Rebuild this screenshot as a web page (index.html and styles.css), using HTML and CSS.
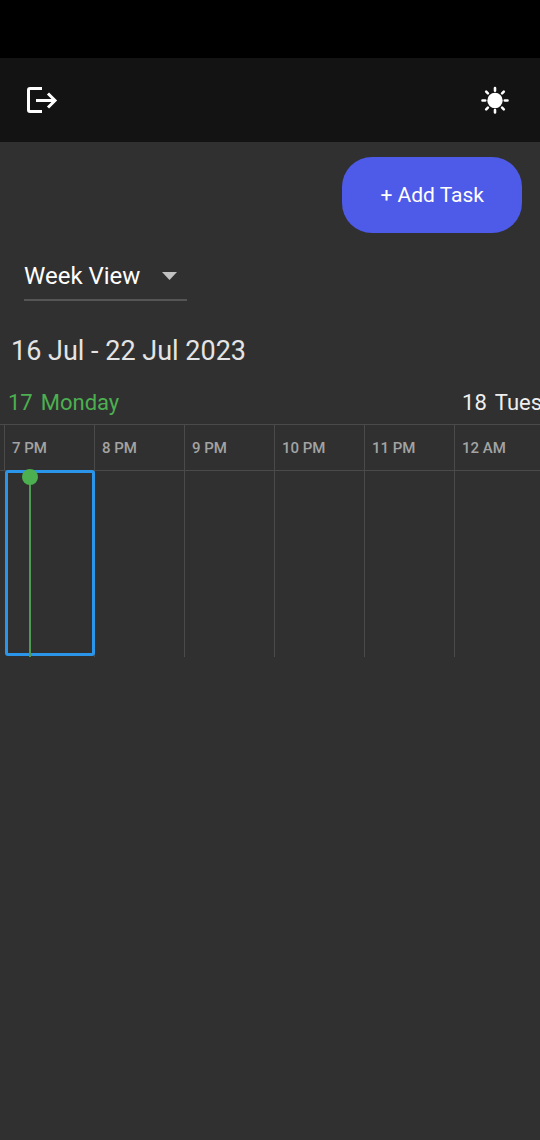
FILE: index.html
```html
<!DOCTYPE html>
<html lang="en">
<head>
<meta charset="utf-8">
<meta name="viewport" content="width=device-width, initial-scale=1">
<title>Week View</title>
<link rel="stylesheet" href="styles.css">
</head>
<body>
<div class="status-bar"></div>
<header class="app-bar">
  <button class="icon-button" type="button" aria-label="Log out">
    <svg width="32" height="28" viewBox="0 0 32 28" fill="none" stroke="currentColor" stroke-width="3">
      <path d="M16 2.5H4a1.5 1.5 0 0 0-1.500 1.500v20a1.500 1.500 0 0 0 1.500 1.500H16"/>
      <path d="M10 14.500H29M22 7.500l7 7-7 7"/>
    </svg>
  </button>
  <button class="icon-button" type="button" aria-label="Light theme">
    <svg width="28" height="28" viewBox="0 0 28 28" fill="none" stroke="currentColor" stroke-width="2.6" stroke-linecap="round">
      <circle cx="14" cy="14.500" r="7.700" fill="currentColor" stroke="none"/>
      <path d="M14 2v2.700M14 24v2.500M1.500 14.500h2.700M23.800 14.500h2.700M5.200 5.700l1.700 1.700M21.100 21.600l1.700 1.700M5.200 23.300l1.700-1.700M21.100 7.400l1.700-1.700"/>
    </svg>
  </button>
</header>
<main>
  <div class="actions"><button class="add-task" type="button">+ Add Task</button></div>
  <div class="view-picker">
    <select class="view-select" aria-label="Calendar view">
      <option>Week View</option>
      <option>Day View</option>
      <option>Month View</option>
    </select>
    <svg class="view-arrow" width="15" height="8" viewBox="0 0 15 8"><path d="M0 0h15L7.5 8z" fill="currentColor"/></svg>
  </div>
  <h1 class="range">16 Jul - 22 Jul 2023</h1>
  <div class="timeline">
    <table class="hours">
      <colgroup>
        <col class="col-edge">
        <col class="col-hour" span="6">
      </colgroup>
      <thead>
        <tr>
          <td class="day-edge"></td>
          <th class="day today" colspan="5" scope="colgroup"><span class="day-label"><span>17</span><span>Monday</span></span></th>
          <th class="day" scope="col"><span class="day-label"><span>18</span><span>Tuesday</span></span></th>
        </tr>
        <tr>
          <td class="hour-edge"></td>
          <th class="hour" scope="col">7 PM</th>
          <th class="hour" scope="col">8 PM</th>
          <th class="hour" scope="col">9 PM</th>
          <th class="hour" scope="col">10 PM</th>
          <th class="hour" scope="col">11 PM</th>
          <th class="hour" scope="col">12 AM</th>
        </tr>
      </thead>
      <tbody>
        <tr>
          <td class="slot-edge"></td>
          <td class="slot selected"><span class="now"></span></td>
          <td class="slot"></td>
          <td class="slot"></td>
          <td class="slot"></td>
          <td class="slot"></td>
          <td class="slot"></td>
        </tr>
      </tbody>
    </table>
  </div>
</main>
</body>
</html>
```
FILE: styles.css
```css
* { box-sizing: border-box; }

body {
  margin: 0;
  min-height: 100vh;
  background: #303030;
  color: #fff;
  font-family: Roboto, sans-serif;
}

.status-bar { height: 58px; background: #000; }

.app-bar {
  display: flex;
  align-items: center;
  justify-content: space-between;
  height: 84px;
  padding: 0 31px 0 26px;
  background: #131313;
}

.icon-button {
  display: flex;
  padding: 0;
  border: 0;
  background: none;
  color: #fff;
}

.actions {
  display: flex;
  justify-content: flex-end;
  padding: 15px 18px 0;
}

.add-task {
  height: 76px;
  padding: 0 38px;
  border: 0;
  border-radius: 30px;
  background: #4e5ae8;
  color: #fff;
  font: 400 21px/24px Roboto, sans-serif;
}

.view-picker {
  display: inline-grid;
  align-items: center;
  margin: 20px 24px 0;
  border-bottom: 2px solid #555;
}

.view-select {
  grid-area: 1 / 1;
  width: 163px;
  height: 46px;
  padding: 0;
  border: 0;
  appearance: none;
  background: none;
  color: #fff;
  font: 400 24px/28px Roboto, sans-serif;
}

.view-arrow {
  grid-area: 1 / 1;
  justify-self: end;
  margin-right: 10px;
  color: #c1c1c1;
  pointer-events: none;
}

.range {
  margin: 32px 11px 0;
  color: #e4e4e4;
  font-size: 27px;
  font-weight: 400;
  line-height: 36px;
}

.timeline { overflow: hidden; padding-top: 12px; }

.hours {
  width: 544px;
  border-spacing: 0;
  table-layout: fixed;
}

.col-edge { width: 4px; }
.col-hour { width: 90px; }

.day-edge,
.slot-edge { padding: 0; }

.hour-edge {
  padding: 0;
  border: solid #4a4a4a;
  border-width: 1px 0;
}

.day {
  height: 43px;
  padding: 0 8px;
  color: #eee;
  font-size: 22px;
  font-weight: 400;
  line-height: 28px;
  text-align: left;
}

.day.today { padding: 0 4px; color: #4caf50; }

.day-label { display: flex; gap: 8px; }

.hour {
  height: 47px;
  padding: 0 7px;
  border: solid #4a4a4a;
  border-width: 1px 0 1px 1px;
  color: #a3a3a3;
  font-size: 15px;
  font-weight: 500;
  line-height: 18px;
  text-align: left;
}

.slot {
  position: relative;
  height: 186px;
  padding: 0;
  border-left: 1px solid #4a4a4a;
}

.slot.selected { border-left-color: transparent; }

.slot.selected::before {
  content: "";
  position: absolute;
  inset: -1px -1px 1px 0;
  z-index: 1;
  border: 3px solid #2b95e9;
  border-radius: 3px;
}

.now {
  position: absolute;
  top: 0;
  bottom: 0;
  left: 24px;
  z-index: 2;
  width: 2px;
  background: #519a54;
}

.now::before {
  content: "";
  position: absolute;
  top: -2px;
  left: -7px;
  width: 16px;
  height: 16px;
  border-radius: 50%;
  background: #4caf50;
}
```
